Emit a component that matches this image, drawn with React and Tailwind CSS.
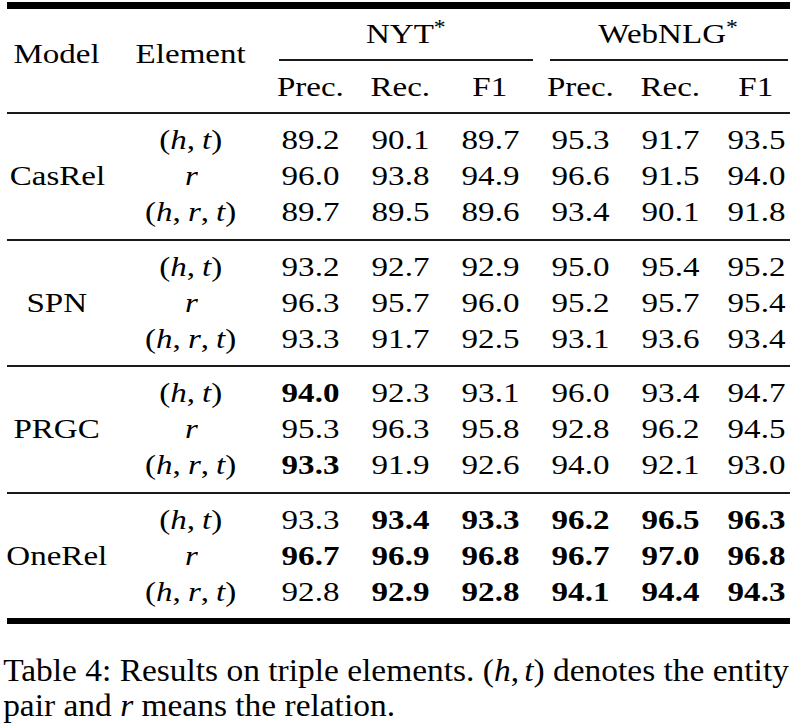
const cols = 'grid grid-cols-[100px_158px_90px_90px_90px_90px_90px_82px] pl-[7px]';

const groups = [
  {
    model: 'CasRel',
    pb: 'pb-[9px]',
    rows: [
      ['89.2', '90.1', '89.7', '95.3', '91.7', '93.5'],
      ['96.0', '93.8', '94.9', '96.6', '91.5', '94.0'],
      ['89.7', '89.5', '89.6', '93.4', '90.1', '91.8'],
    ],
  },
  {
    model: 'SPN',
    pb: 'pb-[8px]',
    rows: [
      ['93.2', '92.7', '92.9', '95.0', '95.4', '95.2'],
      ['96.3', '95.7', '96.0', '95.2', '95.7', '95.4'],
      ['93.3', '91.7', '92.5', '93.1', '93.6', '93.4'],
    ],
  },
  {
    model: 'PRGC',
    pb: 'pb-[9px]',
    rows: [
      ['!94.0', '92.3', '93.1', '96.0', '93.4', '94.7'],
      ['95.3', '96.3', '95.8', '92.8', '96.2', '94.5'],
      ['!93.3', '91.9', '92.6', '94.0', '92.1', '93.0'],
    ],
  },
  {
    model: 'OneRel',
    pb: 'pb-[8px]',
    rows: [
      ['93.3', '!93.4', '!93.3', '!96.2', '!96.5', '!96.3'],
      ['!96.7', '!96.9', '!96.8', '!96.7', '!97.0', '!96.8'],
      ['92.8', '!92.9', '!92.8', '!94.1', '!94.4', '!94.3'],
    ],
  },
];

function V({ children }) {
  return <i className="italic">{children}</i>;
}

// stretched text, the page is wider than the font
function S({ children, className = '' }) {
  return <span className={`inline-block scale-x-[1.18] whitespace-nowrap ${className}`}>{children}</span>;
}

// (h, t) / r / (h, r, t) in math style
function Elem({ i }) {
  if (i === 1) return <V>r</V>;
  return (
    <span>
      (<V>h</V>,<span className="inline-block w-[6px]" />
      {i === 2 && (
        <>
          <V>r</V>,<span className="inline-block w-[6px]" />
        </>
      )}
      <V>t</V>)
    </span>
  );
}

function Group({ g }) {
  return (
    <div className={`${cols} pt-[8px] ${g.pb}`}>
      <div className="row-span-3 flex items-center justify-center">
        <S>{g.model}</S>
      </div>
      {g.rows.map((r, i) => (
        <div key={i} className="contents">
          <div className="col-start-2 flex h-[36px] items-center justify-center pl-[10px]">
            <S>
              <Elem i={i} />
            </S>
          </div>
          {r.map((v, j) => (
            <div key={j} className="flex h-[36px] items-center justify-center">
              <S className={v[0] === '!' ? 'font-bold' : ''}>{v.replace('!', '')}</S>
            </div>
          ))}
        </div>
      ))}
    </div>
  );
}

function Rule() {
  return <div className="ml-[7px] h-[2px] w-[783px] bg-[#1a1a1a]" />;
}

export default function App() {
  return (
    <div className="h-[724px] w-[797px] overflow-hidden bg-white pt-[2px] [font-family:'Liberation_Serif','Times_New_Roman',serif] text-[28px] leading-[36px] text-black">
      <div className="ml-[7px] h-[7px] w-[783px] bg-black" />

      {/* Header */}
      <div className={cols}>
        <div className="row-span-2 flex items-center justify-center pb-[14px]">
          <S>Model</S>
        </div>
        <div className="row-span-2 flex items-center justify-center pb-[14px] pl-[10px]">
          <S>Element</S>
        </div>
        <div className="col-span-3 flex flex-col">
          <div className="flex h-[50px] items-center justify-center pl-[12px]">
            <S>
              NYT<span className="relative -top-[9px] text-[20px] leading-none">*</span>
            </S>
          </div>
          <div className="ml-[14px] mr-[2px] h-[2px] bg-[#1a1a1a]" />
        </div>
        <div className="col-span-3 flex flex-col">
          <div className="flex h-[50px] items-center justify-center pl-[4px]">
            <S>
              WebNLG<span className="relative -top-[9px] text-[20px] leading-none">*</span>
            </S>
          </div>
          <div className="ml-[15px] mr-[9px] h-[2px] bg-[#1a1a1a]" />
        </div>
        {['Prec.', 'Rec.', 'F1', 'Prec.', 'Rec.', 'F1'].map((h, i) => (
          <div key={i} className="flex h-[51px] items-center justify-center">
            <S>{h}</S>
          </div>
        ))}
      </div>
      <Rule />

      {groups.map((g, i) => (
        <div key={g.model}>
          <Group g={g} />
          {i < groups.length - 1 && <Rule />}
        </div>
      ))}
      <div className="ml-[7px] h-[6px] w-[783px] bg-black" />

      {/* Caption */}
      <div className="mt-[29px] w-[760px] origin-left scale-x-[1.045] pl-[3px] text-[32px] leading-[35px]">
        <p className="whitespace-nowrap">
          Table 4: Results on triple elements. (<V>h</V>,<span className="inline-block w-[5px]" />
          <V>t</V>) denotes the entity
        </p>
        <p>
          pair and <V>r</V> means the relation.
        </p>
      </div>
    </div>
  );
}
